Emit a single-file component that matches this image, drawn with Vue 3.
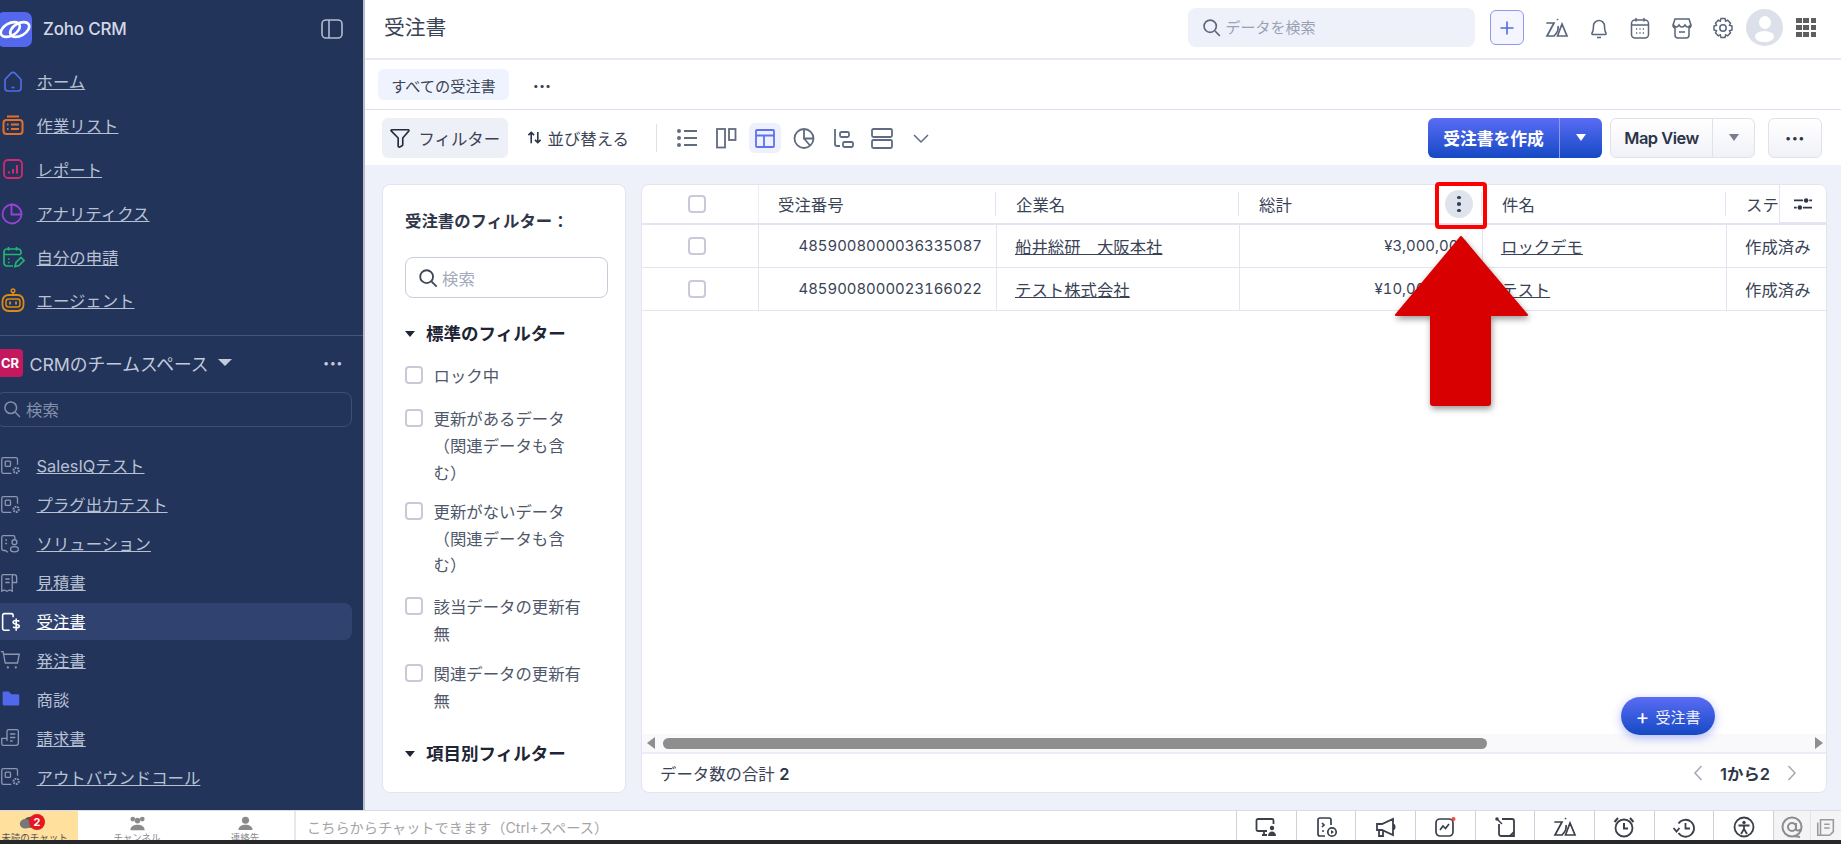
<script setup>
const moduleGear = '<path d="M20 11V5a2 2 0 0 0-2-2H4a2 2 0 0 0-2 2v14a2 2 0 0 0 2 2h9" fill="none" stroke="currentColor" stroke-width="1.500"/><rect x="6" y="7" width="6" height="6" rx="1" fill="none" stroke="currentColor" stroke-width="1.500"/><circle cx="18.500" cy="17.500" r="3" fill="none" stroke="currentColor" stroke-width="2.400" stroke-dasharray="2 1"/>'

const navItems = [
  { label: 'ホーム', color: '#4f6be3', icon: '<path d="M4 10.500 10 4.200c1.200-1.200 2.800-1.200 4 0l6 6.300V19a3 3 0 0 1-3 3H7a3 3 0 0 1-3-3z" fill="none" stroke="currentColor" stroke-width="1.700"/><path d="M10.500 18.500h3" stroke="currentColor" stroke-width="1.700"/>' },
  { label: '作業リスト', color: '#e2702b', icon: '<path d="M6 3.500h12" stroke="currentColor" stroke-width="2"/><rect x="2.500" y="7" width="19" height="14" rx="3" fill="none" stroke="currentColor" stroke-width="2"/><path d="M6 11.500h1.500M10 11.500h8M6 16h1.500M10 16h8" stroke="currentColor" stroke-width="2"/>' },
  { label: 'レポート', color: '#d12a70', icon: '<rect x="3" y="3" width="18" height="18" rx="4" fill="none" stroke="currentColor" stroke-width="1.800"/><path d="M8 16.500v-2M12 16.500v-4.500M16 16.500V8" stroke="currentColor" stroke-width="2"/>' },
  { label: 'アナリティクス', color: '#9a41d9', icon: '<path d="M10.500 3.500a9.500 9.500 0 1 0 10 10h-10z" fill="none" stroke="currentColor" stroke-width="1.800"/><path d="M10.500 3.500a10 10 0 0 1 10 10" fill="none" stroke="currentColor" stroke-width="1.800"/>' },
  { label: '自分の申請', color: '#22b573', icon: '<path d="M12 21H6a3 3 0 0 1-3-3V7a3 3 0 0 1 3-3h11a3 3 0 0 1 3 3v2M3 9.500h17M7.500 2v3.500M15.500 2v3.500M7 14h1.500M7 17.500h1.500" fill="none" stroke="currentColor" stroke-width="1.700"/><path d="m14 21.500 1-4 5-5 3 3-5 5z" fill="none" stroke="currentColor" stroke-width="1.700"/>' },
  { label: 'エージェント', color: '#dd8a14', icon: '<circle cx="12" cy="2.800" r="1.800" fill="none" stroke="currentColor" stroke-width="1.500"/><path d="M12 4.500V7" stroke="currentColor" stroke-width="1.500"/><rect x="1.500" y="7" width="21" height="16" rx="6" fill="none" stroke="currentColor" stroke-width="1.800"/><rect x="5" y="11" width="14" height="8" rx="2.500" fill="none" stroke="currentColor" stroke-width="1.500"/><path d="M9 13.500v3M15 13.500v3" stroke="currentColor" stroke-width="1.800"/>' },
]

const moduleItems = [
  { label: 'SalesIQテスト', icon: moduleGear },
  { label: 'プラグ出力テスト', icon: moduleGear },
  { label: 'ソリューション', icon: '<path d="M9 22 6 20H4a2 2 0 0 1-2-2V5a2 2 0 0 1 2-2h11a2 2 0 0 1 2 2v2M6 8h2M6 12h2" fill="none" stroke="currentColor" stroke-width="1.500"/><circle cx="16.500" cy="10.500" r="2.800" fill="none" stroke="currentColor" stroke-width="1.500"/><ellipse cx="16.500" cy="18.500" rx="4.500" ry="3" fill="none" stroke="currentColor" stroke-width="1.500"/>' },
  { label: '見積書', icon: '<path d="M15 3H4a2 2 0 0 0-2 2v17l3-1.500 3 1.500 3-1.500 3 1.500V5a2 2 0 0 1 2-2 3 3 0 0 1 3 3v6h-5M6 8h5M6 12h5" fill="none" stroke="currentColor" stroke-width="1.500"/>' },
  { label: '受注書', active: true, icon: '<path d="M11 22H5a2 2 0 0 1-2-2V5a2 2 0 0 1 2-2h8a2 2 0 0 1 2 2v2" fill="none" stroke="currentColor" stroke-width="1.800"/><path d="M22 12c-1-1.500-7-1.800-7 .8 0 3 7 1.500 7 4.500 0 2.500-6 2.300-7 .7M18.500 8.500v14" fill="none" stroke="currentColor" stroke-width="1.800"/>' },
  { label: '発注書', icon: '<path d="M1 3h2.500L6 16h14l2-10H4" fill="none" stroke="currentColor" stroke-width="1.500"/><circle cx="9" cy="21" r="1.300" fill="currentColor"/><circle cx="18" cy="21" r="1.300" fill="currentColor"/>' },
  { label: '商談', plain: true, icon: '<path d="M3 7.500V5.500A1.500 1.500 0 0 1 4.500 4H10l3 3h7.500A1.500 1.500 0 0 1 22 8.500v10a1.500 1.500 0 0 1-1.500 1.500h-16A1.500 1.500 0 0 1 3 18.500z" fill="#5068ea"/>' },
  { label: '請求書', icon: '<path d="M8 16V5a2 2 0 0 1 2-2h9a2 2 0 0 1 2 2v13a3 3 0 0 1-3 3H4a2 2 0 0 1-2-2v-6h6M11.500 8h6M11.500 12h6M11.500 16h3" fill="none" stroke="currentColor" stroke-width="1.500"/>' },
  { label: 'アウトバウンドコール', icon: moduleGear },
]

const viewIcons = [
  '<circle cx="4" cy="5" r="2" fill="currentColor"/><circle cx="4" cy="12" r="2" fill="currentColor"/><circle cx="4" cy="19" r="2" fill="currentColor"/><path d="M9 5h13M9 12h13M9 19h13" stroke="currentColor" stroke-width="1.800"/>',
  '<rect x="3" y="3" width="8" height="18.500" fill="none" stroke="currentColor" stroke-width="1.800"/><rect x="15" y="3" width="6.500" height="11" fill="none" stroke="currentColor" stroke-width="1.800"/>',
  '<rect x="3" y="4" width="18" height="17" rx="1" fill="none" stroke="currentColor" stroke-width="1.800"/><path d="M3 9.500h18M11 9.500V21" stroke="currentColor" stroke-width="1.800"/>',
  '<circle cx="12" cy="12.500" r="9.500" fill="none" stroke="currentColor" stroke-width="1.800"/><path d="M12 3v9.500h9.500M12 12.500l6 7" fill="none" stroke="currentColor" stroke-width="1.800"/>',
  '<path d="M4 3v15a2 2 0 0 0 2 2h3" fill="none" stroke="currentColor" stroke-width="1.800"/><rect x="9" y="6" width="9" height="5" rx="1.500" fill="none" stroke="currentColor" stroke-width="1.800"/><rect x="12" y="16" width="10" height="5" rx="1.500" fill="none" stroke="currentColor" stroke-width="1.800"/>',
  '<rect x="2" y="3" width="20" height="8" rx="1.500" fill="none" stroke="currentColor" stroke-width="1.800"/><rect x="2" y="14" width="20" height="8" rx="1.500" fill="none" stroke="currentColor" stroke-width="1.800"/>',
  '<path d="m5 9 7 7 7-7" fill="none" stroke="currentColor" stroke-width="1.500"/>',
]

const zia = '<path d="M2 7h7L2 20h7M12.500 20 17 8l5 12zM12.500 3.500h.1" fill="none" stroke="currentColor" stroke-width="1.700" stroke-linecap="round"/><path d="M9 20c3-3 5-6 4-10" fill="none" stroke="currentColor" stroke-width="1.700"/>'

const headerIcons = [
  zia,
  '<path d="M5 17c1.500-2 1.500-4 1.500-7a5.500 5.500 0 0 1 11 0c0 3 0 5 1.500 7 .5 1-.3 1.500-1 1.500H6c-.7 0-1.500-.5-1-1.500zM10 21.500h4" fill="none" stroke="currentColor" stroke-width="1.500"/>',
  '<rect x="3.500" y="4" width="17" height="18" rx="3.500" fill="none" stroke="currentColor" stroke-width="1.500"/><path d="M8 2v3.500M16 2v3.500M3.500 9h17" stroke="currentColor" stroke-width="1.500"/><path d="M8 13h1.200M11.400 13h1.200M14.800 13h1.200M8 17h1.200M11.400 17h1.200M14.800 17h1.200" stroke="currentColor" stroke-width="1.400"/>',
  '<path d="M5 3h14l2 6a3 3 0 0 1-2 3v7a3 3 0 0 1-3 3H8a3 3 0 0 1-3-3v-7a3 3 0 0 1-2-3zM3.500 9c2 2.500 4 2.500 5.500 0 1.500 2.500 4.500 2.500 6 0 1.500 2.500 3.500 2.500 5.500 0M9 16h6" fill="none" stroke="currentColor" stroke-width="1.500"/>',
  '<path d="M10 2.500h4l.6 2.600 2-.9 2.900 2.900-1 2.100 2.500.8v4l-2.500.8 1 2.100-2.900 2.900-2-1-.6 2.700h-4l-.7-2.700-2 1-2.800-2.900 1-2.100-2.500-.8V10l2.500-.8-1-2.100 2.800-2.900 2 .9z" fill="none" stroke="currentColor" stroke-width="1.500"/><circle cx="12" cy="12" r="3.200" fill="none" stroke="currentColor" stroke-width="1.500"/>',
]

const bottomIcons = [
  '<path d="M13 16H4a1.500 1.500 0 0 1-1.500-1.500v-9A1.500 1.500 0 0 1 4 4h14a1.500 1.500 0 0 1 1.500 1.500V9M8 20h5M10 16v4" fill="none" stroke="currentColor" stroke-width="1.800"/><circle cx="18" cy="13" r="2.200" fill="currentColor"/><path d="M14 21c0-6 8-6 8 0z" fill="currentColor"/>',
  '<path d="M11 21H6a2 2 0 0 1-2-2V5a2 2 0 0 1 2-2h9a2 2 0 0 1 2 2v5M8 8l2 2-2 2M8 16h2" fill="none" stroke="currentColor" stroke-width="1.700"/><circle cx="18" cy="17" r="4.200" fill="none" stroke="currentColor" stroke-width="1.700"/><path d="m17 15 3 2-3 2z" fill="currentColor"/>',
  '<path d="M3 9h5l11-5v16L8 15H3zM5 15v6h4v-6M19 9a3.500 3.500 0 0 1 0 6" fill="none" stroke="currentColor" stroke-width="1.800"/>',
  '<rect x="3" y="4" width="17" height="17" rx="4" fill="none" stroke="currentColor" stroke-width="1.700"/><path d="m7 15 3-4 2.500 2.500L16 9" fill="none" stroke="currentColor" stroke-width="1.700"/><circle cx="20.500" cy="4" r="2" fill="#f04848"/>',
  '<path d="M9 4h10a2 2 0 0 1 2 2v15H8a2 2 0 0 1-2-2V9" fill="none" stroke="currentColor" stroke-width="1.800"/><circle cx="4" cy="4" r="1.800" fill="currentColor"/><path d="m5 5 4 4" stroke="currentColor" stroke-width="1.500"/><path d="M17 21l4-4" stroke="currentColor" stroke-width="1.800"/>',
  zia,
  '<circle cx="12" cy="13" r="8.500" fill="none" stroke="currentColor" stroke-width="1.800"/><path d="M12 8v5.500h4M2.500 7 6 3M21.500 7 18 3" fill="none" stroke="currentColor" stroke-width="2"/>',
  '<path d="M6.500 8.500a8.500 8.500 0 1 1 0 9.500" fill="none" stroke="currentColor" stroke-width="1.800"/><path d="M13.500 8v5.500H18M1.500 13l3 3.500 3-3.500" fill="none" stroke="currentColor" stroke-width="1.800"/>',
  '<circle cx="12" cy="12" r="9.500" fill="none" stroke="currentColor" stroke-width="1.800"/><circle cx="12" cy="7.500" r="1.700" fill="currentColor"/><path d="M6.500 10.500h11M12 10.500v4M12 14l-3 5M12 14l3 5" fill="none" stroke="currentColor" stroke-width="1.800"/>',
]

const rows = [
  { no: '4859008000036335087', company: '船井総研　大阪本社', total: '¥3,000,000', subject: 'ロックデモ', status: '作成済み' },
  { no: '4859008000023166022', company: 'テスト株式会社', total: '¥10,000,000', subject: 'テスト', status: '作成済み' },
]

const filters = [
  'ロック中',
  '更新があるデータ（関連データも含む）',
  '更新がないデータ（関連データも含む）',
  '該当データの更新有無',
  '関連データの更新有無',
]
</script>

<template>
  <div class="page">
    <div class="workspace">
      <aside class="sidebar">
        <div class="brand">
          <span class="logo">
            <svg viewBox="0 0 36 24" width="34" height="23">
              <ellipse cx="13" cy="12" rx="11" ry="6.500" transform="rotate(-30 13 12)" fill="none" stroke="#fff" stroke-width="2.800" />
              <ellipse cx="23" cy="12" rx="11" ry="6.500" transform="rotate(-30 23 12)" fill="none" stroke="#fff" stroke-width="2.800" />
            </svg>
          </span>
          <span class="brand-name">Zoho CRM</span>
          <svg class="panel-icon" viewBox="0 0 22 20" width="22" height="20">
            <rect x="1" y="1" width="20" height="18" rx="4" fill="none" stroke="#b3bbcf" stroke-width="1.600" />
            <path d="M8 1v18" stroke="#b3bbcf" stroke-width="1.600" />
          </svg>
        </div>

        <nav class="nav">
          <a v-for="item in navItems" :key="item.label" class="nav-row">
            <svg class="nav-icon" viewBox="0 0 24 24" :style="{ color: item.color }" v-html="item.icon"></svg>
            <span class="link">{{ item.label }}</span>
          </a>
        </nav>

        <div class="team">
          <span class="team-badge">CR</span>
          <span class="team-name">CRMのチームスペース</span>
          <span class="team-caret"></span>
          <span class="team-dots">•••</span>
        </div>

        <div class="side-search">
          <svg viewBox="0 0 24 24" width="20" height="20">
            <circle cx="10.500" cy="10.500" r="7" fill="none" stroke="#8490aa" stroke-width="1.800" />
            <path d="m16 16 5.500 5.500" stroke="#8490aa" stroke-width="1.800" />
          </svg>
          <span>検索</span>
        </div>

        <div class="modules">
          <a v-for="item in moduleItems" :key="item.label" class="module-row" :class="{ active: item.active }">
            <svg class="module-icon" viewBox="0 0 24 24" v-html="item.icon"></svg>
            <span :class="{ link: !item.plain }">{{ item.label }}</span>
          </a>
        </div>
      </aside>

      <main class="main">
        <header class="topbar">
          <h1>受注書</h1>
          <div class="global-search">
            <svg viewBox="0 0 24 24" width="21" height="21">
              <circle cx="10.500" cy="10.500" r="7" fill="none" stroke="#5c6880" stroke-width="1.900" />
              <path d="m16 16 5.500 5.500" stroke="#5c6880" stroke-width="1.900" />
            </svg>
            <span>データを検索</span>
          </div>
          <button class="add-btn">
            <svg viewBox="0 0 16 16" width="16" height="16"><path d="M8 1.500v13M1.500 8h13" stroke="#4f6be3" stroke-width="1.600" /></svg>
          </button>
          <div class="top-icons">
            <span v-for="(icon, i) in headerIcons" :key="i" class="top-icon">
              <svg viewBox="0 0 24 24" width="24" height="24" v-html="icon"></svg>
            </span>
            <span class="top-icon">
              <span class="avatar">
                <span class="avatar-head"></span>
                <span class="avatar-body"></span>
              </span>
            </span>
            <span class="top-icon">
              <span class="apps"><i v-for="n in 9" :key="n"></i></span>
            </span>
          </div>
        </header>

        <div class="tabs">
          <span class="tab">すべての受注書</span>
          <span class="tab-more">•••</span>
        </div>

        <div class="toolbar">
          <button class="filter-btn">
            <svg viewBox="0 0 24 24" width="22" height="22"><path d="M3 3h18c.8 0 1 .8.600 1.300L15 12v7c0 1-.5 1.500-1.200 1.800l-2 1c-1 .4-1.800-.2-1.800-1.200V12L2.400 4.300C2 3.800 2.200 3 3 3z" fill="none" stroke="#232b3b" stroke-width="1.800" /></svg>
            <span>フィルター</span>
          </button>
          <div class="sort">
            <svg viewBox="0 0 16 16" width="15" height="15"><path d="M4.500 14V2.500M1.500 5.500l3-3 3 3M11.500 2v11.500M8.500 10.500l3 3 3-3" fill="none" stroke="#2b3448" stroke-width="1.700" /></svg>
            <span>並び替える</span>
          </div>
          <span class="tool-sep"></span>
          <div class="views">
            <span v-for="(icon, i) in viewIcons" :key="i" class="view" :class="{ active: i === 2 }">
              <svg viewBox="0 0 24 24" width="24" height="24" v-html="icon"></svg>
            </span>
          </div>
          <div class="create">
            <span class="create-main">受注書を作成</span>
            <span class="create-arrow"><i></i></span>
          </div>
          <div class="mapview">
            <span class="map-main">Map View</span>
            <span class="map-arrow"><i></i></span>
          </div>
          <div class="more-btn">•••</div>
        </div>

        <div class="content">
          <section class="filter-card">
            <h2>受注書のフィルター：</h2>
            <div class="filter-search">
              <svg viewBox="0 0 24 24" width="22" height="22">
                <circle cx="10.500" cy="10.500" r="7" fill="none" stroke="#3d4658" stroke-width="2" />
                <path d="m16 16 5.500 5.500" stroke="#3d4658" stroke-width="2" />
              </svg>
              <span>検索</span>
            </div>
            <h3 class="group first"><i class="caret"></i>標準のフィルター</h3>
            <ul>
              <li v-for="f in filters" :key="f">
                <span class="check"></span>
                <span class="filter-label">{{ f }}</span>
              </li>
            </ul>
            <h3 class="group"><i class="caret"></i>項目別フィルター</h3>
          </section>

          <section class="table-card">
            <div class="grid head">
              <div class="cell check-cell"><span class="check"></span></div>
              <div class="cell"><span class="hd">受注番号</span></div>
              <div class="cell"><span class="hd">企業名</span></div>
              <div class="cell"><span class="hd">総計</span>
                <span class="col-menu"><i></i><i></i><i></i></span>
              </div>
              <div class="cell"><span class="hd">件名</span></div>
              <div class="cell no-sep"><span class="hd">ステータス</span></div>
            </div>
            <div v-for="row in rows" :key="row.no" class="grid body">
              <div class="cell check-cell"><span class="check"></span></div>
              <div class="cell num">{{ row.no }}</div>
              <div class="cell"><span class="u">{{ row.company }}</span></div>
              <div class="cell num">{{ row.total }}</div>
              <div class="cell"><span class="u">{{ row.subject }}</span></div>
              <div class="cell">{{ row.status }}</div>
            </div>

            <div class="col-settings">
              <svg viewBox="0 0 24 20" width="22" height="18">
                <path d="M2 6h10M19 6h3M2 14h3M12 14h10" stroke="#2b3448" stroke-width="2" />
                <circle cx="15.500" cy="6" r="2.500" fill="#2b3448" />
                <circle cx="8.500" cy="14" r="2.500" fill="#2b3448" />
              </svg>
            </div>

            <div class="spacer"></div>
            <button class="fab"><b>+</b>受注書</button>

            <div class="hscroll">
              <i class="arrow-left"></i>
              <span class="thumb"></span>
              <i class="arrow-right"></i>
            </div>
            <div class="table-foot">
              <span>データ数の合計 <b>2</b></span>
              <div class="pager">
                <svg viewBox="0 0 10 18" width="10" height="18"><path d="M8.500 2 2 9l6.500 7" fill="none" stroke="#a4a8b4" stroke-width="1.500" /></svg>
                <b>1から2</b>
                <svg viewBox="0 0 10 18" width="10" height="18"><path d="M1.500 2 8 9l-6.500 7" fill="none" stroke="#a4a8b4" stroke-width="1.500" /></svg>
              </div>
            </div>
          </section>
        </div>
      </main>
    </div>

    <footer class="chatbar">
      <div class="chat-tab unread">
        <svg viewBox="0 0 24 20" width="19" height="16">
          <ellipse cx="14" cy="9" rx="8" ry="7" fill="#555" />
          <ellipse cx="8" cy="11" rx="7" ry="6" fill="#777" />
        </svg>
        <span class="badge">2</span>
        <span class="chat-label">未読のチャット</span>
      </div>
      <div class="chat-tab channel">
        <svg viewBox="0 0 24 20" width="19" height="16">
          <circle cx="6" cy="5" r="3" fill="#8a8a8a" /><circle cx="18" cy="5" r="3" fill="#8a8a8a" /><circle cx="12" cy="7" r="3.500" fill="#8a8a8a" />
          <path d="M3 19c0-9 18-9 18 0z" fill="#8a8a8a" />
        </svg>
        <span class="chat-label">チャンネル</span>
      </div>
      <div class="chat-tab contact">
        <svg viewBox="0 0 24 20" width="17" height="16">
          <circle cx="12" cy="6" r="5" fill="#8a8a8a" />
          <path d="M2 20c0-10 20-10 20 0z" fill="#8a8a8a" />
        </svg>
        <span class="chat-label">連絡先</span>
      </div>
      <div class="chat-input">こちらからチャットできます（Ctrl+スペース）</div>
      <div class="bottom-icons">
        <span v-for="(icon, i) in bottomIcons" :key="i" class="bottom-icon">
          <svg viewBox="0 0 24 24" width="24" height="24" v-html="icon"></svg>
        </span>
      </div>
      <div class="bottom-extra at">
        <svg viewBox="0 0 24 24" width="24" height="24">
          <circle cx="12" cy="12" r="9.500" fill="none" stroke="#8c8c8c" stroke-width="2" />
          <circle cx="12" cy="12" r="4" fill="none" stroke="#8c8c8c" stroke-width="2" />
          <path d="M16 8v6c0 2 4 2 5 0M14 21l6 1" fill="none" stroke="#8c8c8c" stroke-width="2" />
        </svg>
      </div>
      <div class="bottom-extra notes">
        <svg viewBox="0 0 24 24" width="22" height="22">
          <path d="M6 4h14v13l-4 4H6zM3 7v14h11M10 9h6M10 13h6" fill="none" stroke="#9a9a9a" stroke-width="1.700" />
        </svg>
      </div>
    </footer>
    <div class="screen-edge"></div>

    <div class="highlight"></div>
    <svg class="callout" viewBox="0 0 148 182" width="148" height="182">
      <path d="M68 6 3 84h35v88q0 2 2 2h55q2 0 2-2V84h37z" fill="#d80000" stroke="#d80000" stroke-width="2" stroke-linejoin="round" />
    </svg>
  </div>
</template>

<style>
html, body {
  margin: 0;
  background: #fff;
}
</style>

<style scoped>
.page {
  position: relative;
  width: 1841px;
  height: 844px;
  overflow: hidden;
  display: flex;
  flex-direction: column;
  font-family: Inter, "Noto Sans CJK JP", sans-serif;
  font-size: 16.4px;
  color: #3a4356;
}
button {
  font: inherit;
  border: none;
  padding: 0;
}
.workspace {
  display: flex;
  height: 810px;
}

/* sidebar */
.sidebar {
  width: 363px;
  flex: none;
  background: #22345a;
  border-right: 2px solid #b9bdc9;
  color: #b8c1d4;
  overflow: hidden;
}
.brand {
  height: 58px;
  display: flex;
  align-items: center;
  padding-right: 20px;
}
.logo {
  width: 35px;
  height: 35px;
  margin-left: -3px;
  background: #5468ee;
  border-radius: 7px;
  display: flex;
  align-items: center;
  justify-content: center;
  flex: none;
}
.brand-name {
  margin-left: 11px;
  font-size: 17px;
  font-weight: 500;
  letter-spacing: -0.2px;
  color: #d3d8e5;
}
.panel-icon {
  margin-left: auto;
}
.nav {
  margin-top: 1.500px;
}
.nav-row {
  display: flex;
  align-items: center;
  height: 43.800px;
}
.nav-icon {
  width: 24px;
  height: 24px;
  margin-left: 1px;
  margin-right: 11.500px;
  flex: none;
}
.link {
  text-decoration: underline;
}
.team {
  margin-top: 12.700px;
  border-top: 1px solid #47557b;
  height: 54px;
  display: flex;
  align-items: center;
  padding-right: 20px;
  color: #c3cadb;
}
.team-badge {
  width: 26px;
  height: 28px;
  margin-left: -3px;
  border-radius: 4px;
  background: #c4185f;
  color: #fff;
  font-size: 13px;
  font-weight: 700;
  display: flex;
  align-items: center;
  justify-content: center;
  flex: none;
}
.team-name {
  margin-left: 6.500px;
  font-size: 17.800px;
  letter-spacing: -0.1px;
}
.team-caret {
  margin-left: 10px;
  border-left: 7px solid transparent;
  border-right: 7px solid transparent;
  border-top: 7px solid #c3cadb;
}
.team-dots {
  margin-left: auto;
  font-size: 11px;
  letter-spacing: 0.5px;
}
.side-search {
  margin: 2px 11px 0 -4px;
  height: 35px;
  box-sizing: border-box;
  border: 1px solid #3f4e75;
  border-radius: 8px;
  display: flex;
  align-items: center;
  gap: 4px;
  padding-left: 5px;
  color: #8490aa;
}
.modules {
  margin-top: 20px;
  display: flex;
  flex-direction: column;
  gap: 1.900px;
}
.module-row {
  display: flex;
  align-items: center;
  height: 37px;
  margin-right: 11px;
  border-radius: 0 8px 8px 0;
}
.module-row.active {
  background: #304370;
  color: #fff;
}
.module-icon {
  width: 21px;
  height: 21px;
  flex: none;
  margin-right: 15.500px;
  color: #8c98b0;
}
.module-row.active .module-icon {
  color: #fff;
}

/* main */
.main {
  flex: 1;
  min-width: 0;
  display: flex;
  flex-direction: column;
  background: #fff;
}
.topbar {
  height: 58px;
  box-sizing: content-box;
  border-bottom: 2px solid #e9e9f5;
  display: flex;
  align-items: center;
  padding-left: 19px;
  padding-right: 14px;
  padding-bottom: 0;
  flex: none;
}
.topbar h1 {
  margin: 0 0 6px;
  font-size: 20.800px;
  font-weight: 400;
  color: #3a4356;
}
.global-search {
  margin-left: auto;
  margin-bottom: 3px;
  width: 287px;
  height: 39px;
  box-sizing: border-box;
  background: #eef0fa;
  border-radius: 8px;
  display: flex;
  align-items: center;
  gap: 4px;
  padding-left: 13px;
  font-size: 15px;
  color: #9aa1b4;
}
.global-search span {
  margin-top: -3px;
}
.add-btn {
  width: 34px;
  height: 35px;
  margin-left: 15px;
  margin-bottom: 3px;
  border: 1px solid #8c9bf0;
  border-radius: 6px;
  background: #f4f5fe;
  display: flex;
  align-items: center;
  justify-content: center;
}
.top-icons {
  margin-left: 13px;
  margin-bottom: 3px;
  display: flex;
  color: #5a667c;
}
.top-icon {
  width: 41.500px;
  display: flex;
  align-items: center;
  justify-content: center;
}
.avatar {
  position: relative;
  width: 37px;
  height: 37px;
  border-radius: 50%;
  background: #dce0e8;
  overflow: hidden;
  display: block;
  flex: none;
}
.avatar-head {
  position: absolute;
  left: 12.500px;
  top: 7px;
  width: 12px;
  height: 13px;
  border-radius: 50%;
  background: #fff;
}
.avatar-body {
  position: absolute;
  left: 9px;
  top: 22px;
  width: 19px;
  height: 11px;
  border-radius: 50%;
  background: #fff;
}
.apps {
  display: grid;
  grid-template-columns: repeat(3, 5.600px);
  gap: 1.500px;
}
.apps i {
  height: 5.600px;
  background: #5f5f5f;
}
.tabs {
  height: 49px;
  border-bottom: 1px solid #dedfec;
  display: flex;
  align-items: center;
  padding-left: 13px;
  flex: none;
}
.tab {
  height: 31px;
  width: 131px;
  background: #eff3fd;
  border-radius: 6px;
  display: flex;
  align-items: center;
  justify-content: center;
  font-size: 15.200px;
}
.tab-more {
  margin-left: 24px;
  font-size: 10px;
  letter-spacing: 0.5px;
}
.toolbar {
  height: 55px;
  display: flex;
  align-items: center;
  padding-left: 16.500px;
  padding-right: 19px;
  flex: none;
}
.filter-btn {
  width: 126px;
  height: 40px;
  background: #eef0f8;
  border-radius: 6px;
  display: flex;
  align-items: center;
  gap: 8px;
  padding-left: 7px;
  color: #3a4356;
}
.sort {
  margin-left: 19px;
  display: flex;
  align-items: center;
  gap: 6px;
}
.tool-sep {
  width: 1px;
  height: 28px;
  margin-left: 27px;
  background: #dedfe8;
}
.views {
  margin-left: 11px;
  display: flex;
  color: #5f6b80;
}
.view {
  width: 39px;
  height: 30px;
  display: flex;
  align-items: center;
  justify-content: center;
  border-radius: 6px;
}
.view.active {
  width: 32px;
  margin: 0 3.500px;
  background: #eef0fb;
  color: #5c72f0;
}
.create {
  margin-left: auto;
  width: 174px;
  height: 40px;
  border-radius: 6px;
  background: linear-gradient(#5a6cf4, #1549c4);
  color: #fff;
  font-size: 16.800px;
  font-weight: 700;
  display: flex;
}
.create-main {
  width: 132px;
  display: flex;
  align-items: center;
  justify-content: center;
  border-right: 1px solid #8a9cf0;
  box-sizing: border-box;
}
.create-arrow, .map-arrow {
  flex: 1;
  display: flex;
  align-items: center;
  justify-content: center;
}
.create-arrow i, .map-arrow i {
  border-left: 5.500px solid transparent;
  border-right: 5.500px solid transparent;
  border-top: 7px solid #fff;
}
.map-arrow i {
  border-top-color: #777d8c;
}
.mapview {
  margin-left: 8px;
  width: 145px;
  height: 40px;
  box-sizing: border-box;
  border: 1px solid #e0e1ec;
  border-radius: 6px;
  background: linear-gradient(#fff, #f1f2f8);
  display: flex;
  font-weight: 600;
  color: #2b3448;
}
.map-main {
  width: 102px;
  box-sizing: border-box;
  border-right: 1px solid #e0e1ec;
  display: flex;
  align-items: center;
  justify-content: center;
  letter-spacing: -0.5px;
}
.more-btn {
  margin-left: 13px;
  width: 54px;
  height: 40px;
  box-sizing: border-box;
  border: 1px solid #e0e1ec;
  border-radius: 6px;
  background: linear-gradient(#fff, #f1f2f8);
  display: flex;
  align-items: center;
  justify-content: center;
  font-size: 11px;
  letter-spacing: 0.5px;
  color: #2b3448;
}

/* content */
.content {
  flex: 1;
  min-height: 0;
  background: #eef0fa;
  display: flex;
  gap: 15px;
  padding: 19px 14px 17px 17px;
}
.filter-card {
  width: 244px;
  box-sizing: border-box;
  flex: none;
  background: #fff;
  border: 1px solid #e3e4f2;
  border-radius: 8px;
  padding: 24px 17px 0 22px;
  overflow: hidden;
}
.filter-card h2 {
  margin: 0;
  font-size: 16.400px;
  line-height: 24px;
  font-weight: 700;
  color: #2e3648;
}
.filter-search {
  margin-top: 24px;
  width: 203px;
  height: 41px;
  box-sizing: border-box;
  border: 1px solid #c9cbd9;
  border-radius: 8px;
  display: flex;
  align-items: center;
  gap: 3px;
  padding-left: 11px;
  color: #a3aabd;
}
.group {
  margin: 0;
  font-size: 17.500px;
  line-height: 26px;
  font-weight: 700;
  color: #1e2534;
  display: flex;
  align-items: center;
  gap: 11px;
}
.group.first {
  margin-top: 23px;
}
.caret {
  border-left: 5px solid transparent;
  border-right: 5px solid transparent;
  border-top: 6px solid #1e2534;
}
.filter-card ul {
  list-style: none;
  margin: 18px 0 27px;
  padding: 0;
}
.filter-card li {
  display: flex;
  align-items: flex-start;
  gap: 10.500px;
  margin-bottom: 14.500px;
}
.filter-card li:nth-child(1) {
  margin-bottom: 18.500px;
}
.filter-card li:nth-child(3) {
  margin-bottom: 17px;
}
.filter-card li:nth-child(4) {
  margin-bottom: 15.500px;
}
.filter-card li .check {
  margin-top: 1px;
}
.filter-label {
  width: 150px;
  line-height: 26.700px;
  margin-top: -2px;
  color: #4f586b;
}
.check {
  width: 18px;
  height: 18px;
  box-sizing: border-box;
  border: 2px solid #c9cad9;
  border-radius: 4px;
  background: #fff;
  display: block;
  flex: none;
}

/* table */
.table-card {
  position: relative;
  flex: 1;
  min-width: 0;
  display: flex;
  flex-direction: column;
  background: #fff;
  border: 1px solid #e3e4f2;
  border-radius: 8px;
  overflow: hidden;
}
.grid {
  display: grid;
  grid-template-columns: 117px 238px 243px 243px 244px 100px;
  flex: none;
}
.head {
  height: 38px;
  border-bottom: 2px solid #e4e3f4;
}
.body {
  height: 42px;
  border-bottom: 1px solid #e4e3f4;
}
.cell {
  display: flex;
  align-items: center;
  padding: 0 18px;
  white-space: nowrap;
  overflow: hidden;
  min-width: 0;
  border-right: 1px solid transparent;
}
.body .cell {
  border-right-color: #e4e3f4;
}
.body .cell:last-child {
  border-right: none;
}
.head .cell {
  position: relative;
  padding-left: 19px;
}
.head .cell:first-child {
  border-right-color: #ececf6;
}
.head .cell:not(:first-child):not(.no-sep)::after {
  content: "";
  position: absolute;
  right: 0;
  top: 7px;
  height: 24px;
  width: 1px;
  background: #e4e3f4;
}
.check-cell {
  justify-content: center;
  padding: 0 7px 0 0;
}
.head .check-cell {
  padding: 0 6px 0 0;
}
.num {
  justify-content: flex-end;
  padding-right: 14px;
  font-size: 14.900px;
  font-variant-numeric: tabular-nums;
}
.u {
  text-decoration: underline;
  color: #3a4356;
}
.col-menu {
  margin-left: auto;
  margin-right: -9px;
  width: 28px;
  height: 28px;
  border-radius: 50%;
  background: #dfe3ee;
  display: flex;
  flex-direction: column;
  align-items: center;
  justify-content: center;
  gap: 3px;
  flex: none;
}
.col-menu i {
  width: 3.500px;
  height: 3.500px;
  border-radius: 50%;
  background: #3a4356;
}
.col-settings {
  position: absolute;
  right: 0;
  top: 0;
  width: 46px;
  height: 37px;
  background: #fff;
  border-left: 1px solid #e4e3f4;
  border-bottom: 1px solid #e4e3f4;
  display: flex;
  align-items: center;
  justify-content: center;
}
.spacer {
  flex: 1;
}
.fab {
  position: absolute;
  left: 979px;
  top: 512px;
  width: 94px;
  height: 38px;
  border-radius: 19px;
  background: linear-gradient(#5a6cf4, #1549c4);
  box-shadow: 0 3px 10px rgba(84, 104, 238, 0.45);
  color: #f0f2fc;
  font-size: 15px;
  display: flex;
  align-items: center;
  justify-content: center;
  gap: 6px;
}
.fab b {
  font-weight: 400;
  font-size: 21px;
  line-height: 1;
  color: #fff;
}
.hscroll {
  height: 18px;
  flex: none;
  background: #f9f9fb;
  border-bottom: 2px solid #ecebf7;
  display: flex;
  align-items: center;
  padding: 0 3px 0 5px;
}
.thumb {
  width: 824px;
  height: 11px;
  border-radius: 6px;
  background: #8e8e8e;
  margin-left: 8px;
}
.arrow-left {
  border-top: 6px solid transparent;
  border-bottom: 6px solid transparent;
  border-right: 8px solid #8e8e8e;
}
.arrow-right {
  margin-left: auto;
  border-top: 6px solid transparent;
  border-bottom: 6px solid transparent;
  border-left: 8px solid #8e8e8e;
}
.table-foot {
  height: 38px;
  flex: none;
  display: flex;
  align-items: center;
  justify-content: space-between;
  padding: 0 29px 0 18px;
}
.table-foot b {
  font-weight: 600;
  color: #2e3648;
}
.pager {
  display: flex;
  align-items: center;
  gap: 17px;
}

/* chat bar */
.chatbar {
  height: 30px;
  flex: none;
  display: flex;
  background: #fff;
  border-top: 1px solid #dcdde4;
  box-sizing: border-box;
  overflow: hidden;
}
.chat-tab {
  position: relative;
  display: flex;
  flex-direction: column;
  align-items: center;
  flex: none;
}
.chat-tab svg {
  margin-top: 4px;
  flex: none;
}
.chat-label {
  position: absolute;
  top: 19.500px;
  left: 0;
  right: 0;
  text-align: center;
  font-size: 9.500px;
  line-height: 14px;
  color: #8a8a8a;
  white-space: nowrap;
}
.chat-tab.unread {
  width: 78px;
  background: #ffe09c;
  align-items: flex-start;
  padding-left: 19px;
  box-sizing: border-box;
}
.chat-tab.unread .chat-label {
  color: #555;
  margin-left: -9px;
}
.channel {
  width: 118px;
}
.contact {
  width: 98px;
}
.badge {
  position: absolute;
  left: 29px;
  top: 3px;
  width: 16px;
  height: 16px;
  border-radius: 50%;
  background: #e8161e;
  color: #fff;
  font-size: 11px;
  font-weight: 700;
  line-height: 16px;
  text-align: center;
}
.chat-input {
  flex: 1;
  border-left: 2px solid #e8e8ec;
  padding-left: 11px;
  font-size: 14.200px;
  line-height: 34px;
  color: #a4a4a8;
  white-space: nowrap;
}
.bottom-icons {
  display: flex;
  flex: none;
  border-left: 1px solid #cfd0da;
}
.bottom-icon {
  width: 59.700px;
  box-sizing: border-box;
  border-right: 1px solid #cfd0da;
  display: flex;
  align-items: center;
  justify-content: center;
  color: #3a3f4a;
  padding-top: 2px;
}
.bottom-extra {
  display: flex;
  align-items: center;
  justify-content: center;
  background: #f4f4f6;
  flex: none;
  padding-top: 2px;
}
.at {
  width: 36px;
}
.notes {
  width: 30px;
  border-left: 1px solid #e2e2e8;
}
.screen-edge {
  height: 4px;
  flex: none;
  background: #26282c;
}

/* annotation over the screenshot */
.highlight {
  position: absolute;
  left: 1435px;
  top: 182px;
  width: 52px;
  height: 47px;
  box-sizing: border-box;
  border: 4.500px solid #fe0000;
  border-radius: 4px;
}
.callout {
  position: absolute;
  left: 1393px;
  top: 231px;
  filter: drop-shadow(1px 3px 3px rgba(0, 0, 0, 0.4));
}
</style>
